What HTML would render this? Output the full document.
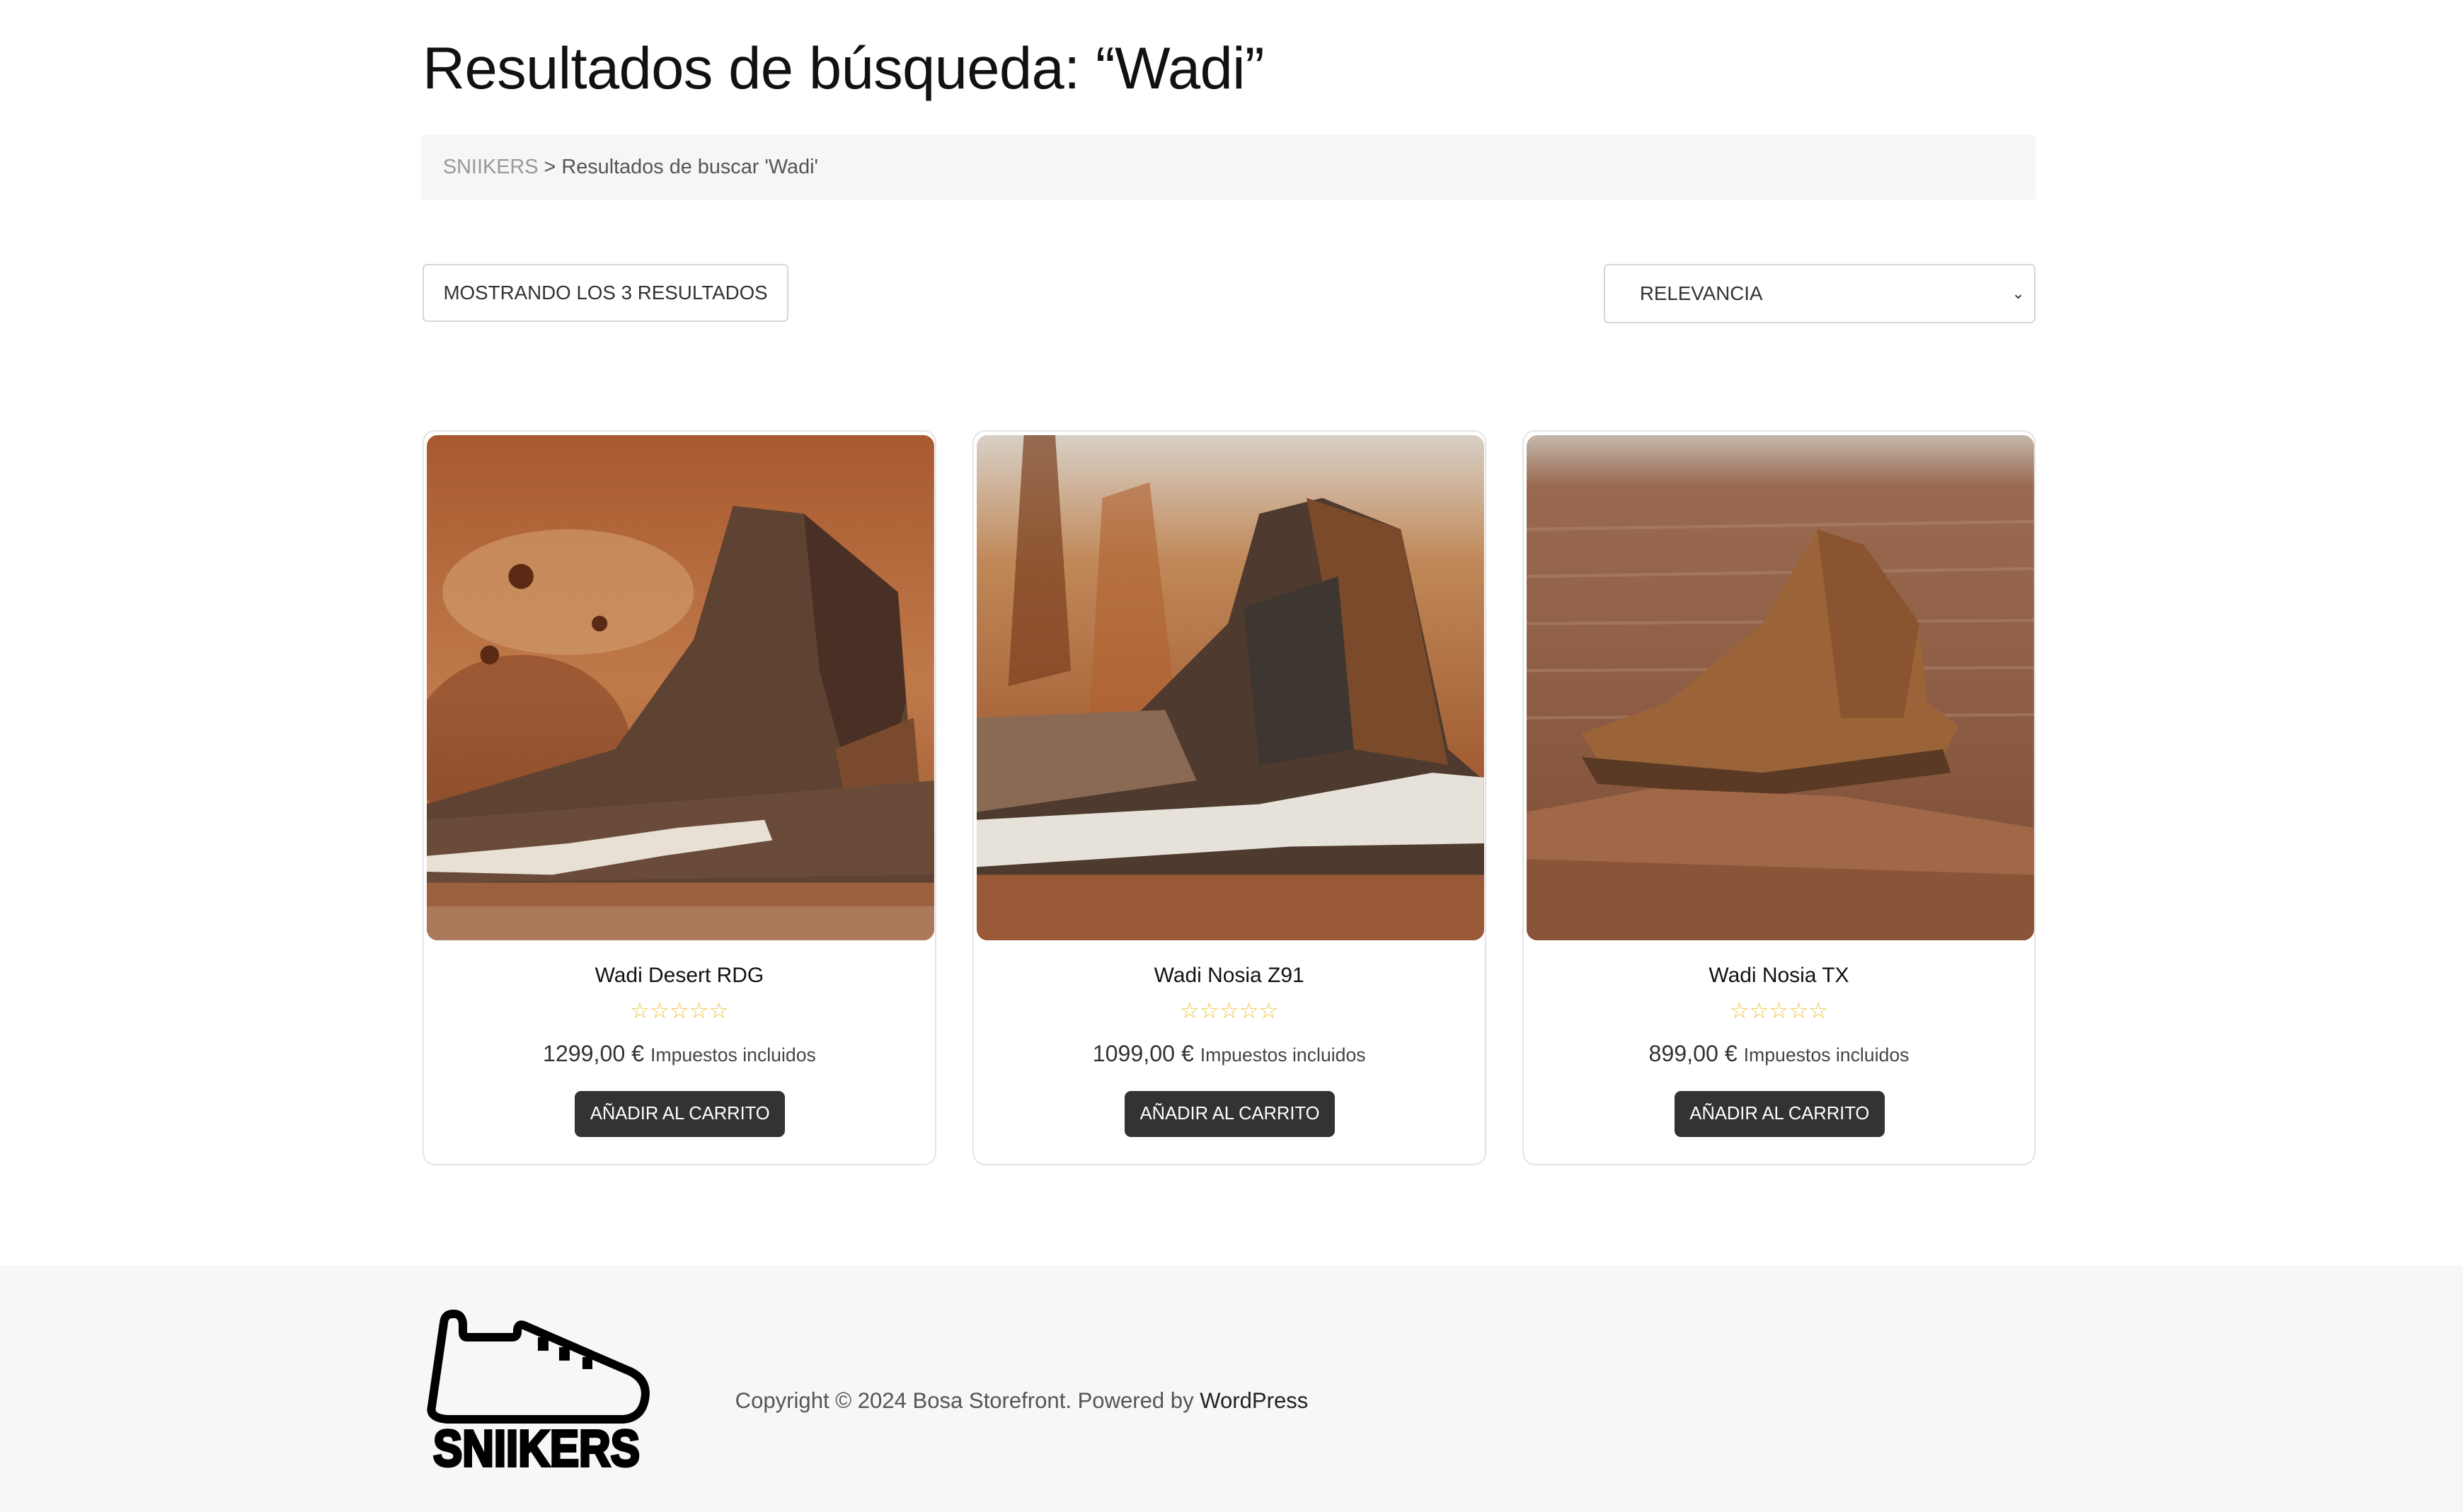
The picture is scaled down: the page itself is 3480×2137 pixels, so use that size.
<!DOCTYPE html>
<html><head><meta charset="utf-8"><style>
html,body{margin:0;padding:0;background:#fff;}
body{width:1568px;height:962.4px;zoom:2.2194;position:relative;overflow:hidden;font-family:"Liberation Sans",sans-serif;color:#222;}
.abs{position:absolute;}
h1{position:absolute;left:269px;top:22px;margin:0;font-weight:400;font-size:37.5px;letter-spacing:-0.3px;color:#111;}
.bc{left:268px;top:86px;width:1028px;height:41px;background:#f6f6f6;font-size:13px;line-height:41px;color:#555;}
.bc span{color:#999;}
.res{left:269px;top:168px;width:233px;height:37px;border:1px solid #d6d6d6;border-radius:3px;box-sizing:border-box;font-size:12.5px;line-height:35px;text-align:center;color:#333;}
.sel{left:1021px;top:168px;width:275px;height:38px;border:1px solid #d6d6d6;border-radius:3px;box-sizing:border-box;font-size:12.5px;line-height:36px;padding-left:22px;color:#333;}
.card{width:327px;height:468px;top:274px;border:1px solid #e4e4e4;border-radius:8px;box-sizing:border-box;background:#fff;}
.card svg{position:absolute;left:2px;top:2px;border-radius:7px;}
.t{position:absolute;left:0;right:0;top:339px;text-align:center;font-size:13.5px;color:#111;}
.st{position:absolute;left:0;right:0;top:361px;text-align:center;font-size:14px;color:#f0c23a;letter-spacing:0px;}
.p{position:absolute;left:0;right:0;top:388px;text-align:center;font-size:14.5px;color:#333;}
.p small{font-size:12px;color:#444;}
.b{position:absolute;left:96px;top:420px;width:134px;height:29px;background:#333;border-radius:4px;color:#fff;font-size:11.5px;line-height:29px;text-align:center;}
.foot{left:0;top:806px;width:1568px;height:157px;background:#f7f7f7;}
.cp{left:468px;top:884px;font-size:14px;color:#555;}
.cp b{font-weight:400;color:#222;}
</style></head><body>
<h1>Resultados de búsqueda: “Wadi”</h1>
<div class="abs bc"><span style="margin-left:14px">SNIIKERS</span> &gt; Resultados de buscar 'Wadi'</div>
<div class="abs res">MOSTRANDO LOS 3 RESULTADOS</div>
<div class="abs sel">RELEVANCIA<span style="position:absolute;right:6px;top:0;font-size:10px">⌄</span></div>

<div class="abs card" style="left:269px">
<svg width="323" height="322" viewBox="0 0 323 322">
<defs><linearGradient id="g1" x1="0" y1="0" x2="0" y2="1"><stop offset="0" stop-color="#a85a30"/><stop offset="0.5" stop-color="#c07a4a"/><stop offset="1" stop-color="#8a4a2a"/></linearGradient></defs>
<rect width="323" height="322" fill="url(#g1)"/>
<ellipse cx="90" cy="100" rx="80" ry="40" fill="#d4a070" opacity=".6"/>
<ellipse cx="60" cy="200" rx="70" ry="60" fill="#7a3a1e" opacity=".5"/>
<circle cx="60" cy="90" r="8" fill="#5a2a14"/><circle cx="110" cy="120" r="5" fill="#5a2a14"/><circle cx="40" cy="140" r="6" fill="#5a2a14"/>
<path d="M0 235 L120 200 L170 130 L195 45 L240 50 L300 100 L310 230 L323 250 L323 285 L0 290 Z" fill="#5e4232"/>
<path d="M240 50 L300 100 L305 170 L280 260 L250 150 Z" fill="#4a3024"/>
<path d="M260 200 L310 180 L315 240 L270 250 Z" fill="#7a4a2e"/>
<path d="M0 245 L200 230 L323 220 L323 280 L0 285 Z" fill="#6a4a38"/>
<path d="M0 268 L90 260 L160 250 L215 245 L220 258 L150 268 L80 280 L0 278 Z" fill="#e8e0d4"/>
<rect y="285" width="323" height="37" fill="#9a6040"/>
<rect y="300" width="323" height="22" fill="#b88a6a" opacity=".6"/>
</svg>
<div class="t">Wadi Desert RDG</div><div class="st">☆☆☆☆☆</div>
<div class="p">1299,00 € <small>Impuestos incluidos</small></div><div class="b">AÑADIR AL CARRITO</div>
</div>

<div class="abs card" style="left:619px">
<svg width="323" height="322" viewBox="0 0 323 322">
<defs><linearGradient id="g2" x1="0" y1="0" x2="0" y2="1"><stop offset="0" stop-color="#d8d0c6"/><stop offset="0.25" stop-color="#c08858"/><stop offset="0.7" stop-color="#a05a30"/><stop offset="1" stop-color="#8a4a2a"/></linearGradient></defs>
<rect width="323" height="322" fill="url(#g2)"/>
<path d="M30 0 L50 0 L60 150 L20 160 Z" fill="#7a4020" opacity=".7"/>
<path d="M80 40 L110 30 L130 200 L70 210 Z" fill="#b06030" opacity=".6"/>
<path d="M0 200 L100 180 L160 120 L180 50 L220 40 L270 60 L300 200 L323 220 L323 285 L0 290 Z" fill="#4e3a2e"/>
<path d="M0 180 L120 175 L140 220 L0 240 Z" fill="#8a6a54"/>
<path d="M210 40 L270 60 L300 210 L240 200 Z" fill="#7a4a2a"/>
<path d="M170 110 L230 90 L240 200 L180 210 Z" fill="#3e3630"/>
<path d="M0 245 L180 235 L290 215 L323 218 L323 260 L200 262 L0 275 Z" fill="#e6e2da"/>
<rect y="280" width="323" height="42" fill="#9a5a38"/>
</svg>
<div class="t">Wadi Nosia Z91</div><div class="st">☆☆☆☆☆</div>
<div class="p">1099,00 € <small>Impuestos incluidos</small></div><div class="b">AÑADIR AL CARRITO</div>
</div>

<div class="abs card" style="left:969px">
<svg width="323" height="322" viewBox="0 0 323 322">
<defs><linearGradient id="g3" x1="0" y1="0" x2="0" y2="1"><stop offset="0" stop-color="#c4b8ac"/><stop offset="0.1" stop-color="#9a6a50"/><stop offset="0.6" stop-color="#8a5a42"/><stop offset="1" stop-color="#7a4a32"/></linearGradient></defs>
<rect width="323" height="322" fill="url(#g3)"/>
<g stroke="#b08870" stroke-width="2" opacity=".5"><line x1="0" y1="60" x2="323" y2="55"/><line x1="0" y1="90" x2="323" y2="85"/><line x1="0" y1="120" x2="323" y2="118"/><line x1="0" y1="150" x2="323" y2="148"/><line x1="0" y1="180" x2="323" y2="178"/></g>
<path d="M35 190 L90 170 L150 120 L185 60 L215 70 L250 120 L255 170 L275 185 L260 215 L150 225 L50 215 Z" fill="#9a6438"/>
<path d="M185 60 L215 70 L250 120 L240 180 L200 180 Z" fill="#8a5430"/>
<path d="M35 205 L150 215 L265 200 L270 215 L150 230 L45 222 Z" fill="#5a3a24"/>
<path d="M0 240 L80 225 L200 230 L323 250 L323 322 L0 322 Z" fill="#a06848"/>
<path d="M0 270 L323 280 L323 322 L0 322 Z" fill="#8a5438"/>
</svg>
<div class="t">Wadi Nosia TX</div><div class="st">☆☆☆☆☆</div>
<div class="p">899,00 € <small>Impuestos incluidos</small></div><div class="b">AÑADIR AL CARRITO</div>
</div>

<div class="abs foot"></div>
<svg class="abs" style="left:261.3px;top:820px" width="180.2" height="126.2" viewBox="0 0 400 280">
<path d="M30 168 Q26 184 52 186 L300 186 Q330 184 332 150 Q332 126 305 116 L160 53 Q152 50 151 60 L151 64 Q150 70 143 70 L80 70 Q74 70 74 63 L74 50 Q72 36 60 37 Q48 37 47 50 Z" fill="none" stroke="#000" stroke-width="12" stroke-linejoin="round"/>
<rect x="180" y="70" width="15" height="19" fill="#000"/><rect x="210" y="84" width="15" height="19" fill="#000"/><rect x="243" y="98" width="14" height="17" fill="#000"/>
<text x="32" y="252" font-family="Liberation Sans,sans-serif" font-weight="700" font-size="72" textLength="292" lengthAdjust="spacingAndGlyphs" fill="#000" stroke="#000" stroke-width="4">SNIIKERS</text>
</svg>
<div class="abs cp">Copyright © 2024 Bosa Storefront. Powered by <b>WordPress</b></div>
</body></html>
